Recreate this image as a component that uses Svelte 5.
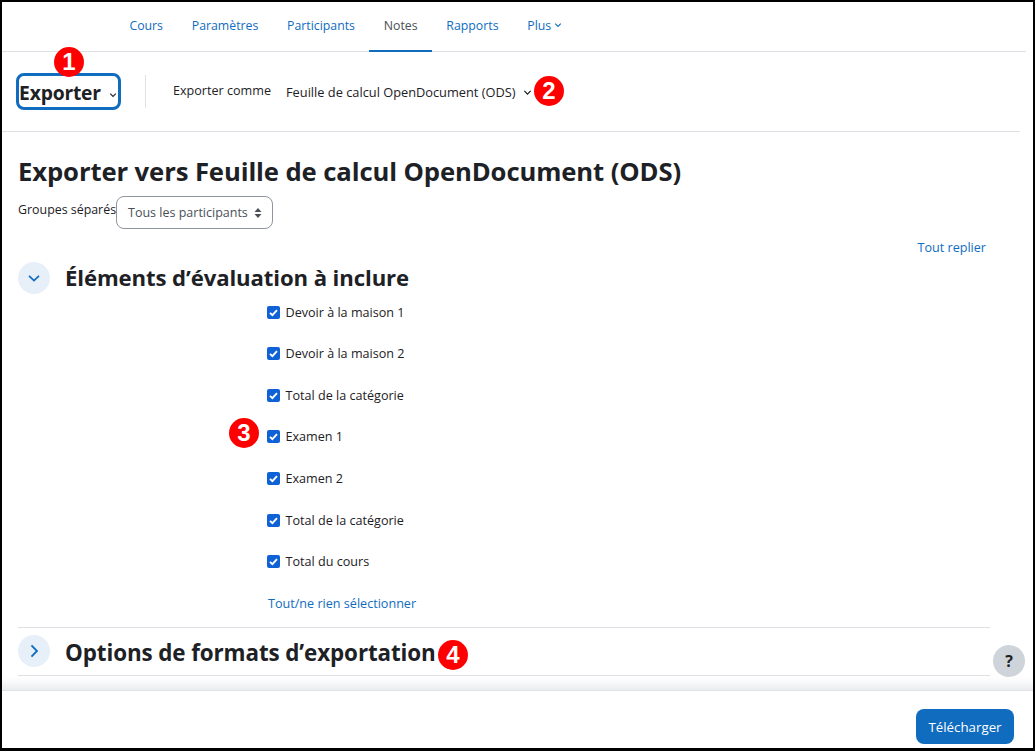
<script lang="ts">
  const tabs = [
    { label: 'Cours' },
    { label: 'Paramètres' },
    { label: 'Participants' },
    { label: 'Notes', active: true },
    { label: 'Rapports' },
    { label: 'Plus', more: true }
  ];

  const items = [
    'Devoir à la maison 1',
    'Devoir à la maison 2',
    'Total de la catégorie',
    'Examen 1',
    'Examen 2',
    'Total de la catégorie',
    'Total du cours'
  ];
</script>

{#snippet chevron(size = 8)}
  <svg class="chev" width={size} height={size} viewBox="0 0 10 10" aria-hidden="true">
    <path d="M1.5 3.2 5 6.8l3.5-3.6" fill="none" stroke="currentColor" stroke-width="1.4" />
  </svg>
{/snippet}

<div class="frame">
  <nav class="tabs">
    {#each tabs as tab}
      <a class="tab" class:active={tab.active} href="#top">
        {tab.label}
        {#if tab.more}{@render chevron(8)}{/if}
      </a>
    {/each}
  </nav>

  <div class="tertiary">
    <button class="export-btn">Exporter {@render chevron(8)}</button>
    <div class="sep"></div>
    <span class="export-label">Exporter comme</span>
    <span class="export-value">Feuille de calcul OpenDocument (ODS) {@render chevron(9)}</span>
    <span class="badge b1">1</span>
    <span class="badge b2">2</span>
  </div>

  <main class="content">
    <h2>Exporter vers Feuille de calcul OpenDocument (ODS)</h2>
    <div class="groups">
      <span class="groups-label">Groupes séparés</span>
      <div class="select">
        Tous les participants
        <svg width="8" height="12" viewBox="0 0 8 12" aria-hidden="true">
          <path d="M4 1 7.5 5h-7zM4 11 .5 7h7z" fill="#495057" />
        </svg>
      </div>
    </div>

    <div class="collapse-all"><a href="#top">Tout replier</a></div>

    <section class="first">
      <div class="sec-head">
        <span class="toggle">
          <svg width="14" height="14" viewBox="0 0 14 14" aria-hidden="true">
            <path d="M2 4.8 7 9.6l5-4.8" fill="none" stroke="#0f6cbf" stroke-width="1.7" />
          </svg>
        </span>
        <h3>Éléments d’évaluation à inclure</h3>
      </div>
      <ul class="checks">
        {#each items as item, i}
          <li>
            <span class="box">
              <svg width="13" height="13" viewBox="0 0 13 13" aria-hidden="true">
                <path d="M3 6.8 5.4 9.2 10 4.2" fill="none" stroke="#fff" stroke-width="1.9" />
              </svg>
            </span>
            {item}
            {#if i === 3}<span class="badge b3">3</span>{/if}
          </li>
        {/each}
      </ul>
      <a class="select-all" href="#top">Tout/ne rien sélectionner</a>
    </section>

    <section class="second">
      <div class="sec-head">
        <span class="toggle">
          <svg width="16" height="16" viewBox="0 0 14 14" aria-hidden="true">
            <path d="M4.8 2 9.6 7l-4.8 5" fill="none" stroke="#0f6cbf" stroke-width="1.6" />
          </svg>
        </span>
        <h3>Options de formats d’exportation</h3>
        <span class="badge b4">4</span>
      </div>
    </section>

    <div class="help">?</div>
  </main>

  <footer>
    <button class="primary">Télécharger</button>
  </footer>
</div>

<style>
  :global(body) {
    margin: 0;
    background: #fff;
  }
  .frame {
    box-sizing: border-box;
    width: 1035px;
    height: 751px;
    border: 2px solid #000;
    border-bottom-width: 3px;
    display: flex;
    flex-direction: column;
    position: relative;
    overflow: hidden;
    font-family: 'Open Sans', 'Noto Sans', sans-serif;
    font-size: 12.6px;
    color: #1d2125;
  }
  a {
    color: #0f6cbf;
    text-decoration: none;
  }
  .tabs {
    height: 50px;
    flex: none;
    box-sizing: border-box;
    display: flex;
    padding-left: 113px;
    margin-right: 7px;
    border-bottom: 1px solid #dee2e6;
    font-size: 12.3px;
  }
  .tab {
    display: flex;
    align-items: center;
    gap: 3px;
    padding: 0 14.4px 2px;
    box-sizing: border-box;
    height: 50px;
    border-bottom: 2px solid transparent;
    white-space: nowrap;
  }
  .tab.active {
    color: #495057;
    border-bottom-color: #0f6cbf;
  }
  .chev {
    display: inline-block;
  }
  .tertiary {
    height: 80px;
    flex: none;
    box-sizing: border-box;
    border-bottom: 1px solid #dee2e6;
    margin-right: 13px;
    display: flex;
    align-items: center;
    padding-left: 14px;
    position: relative;
  }
  .export-btn {
    box-sizing: border-box;
    width: 105px;
    height: 37px;
    border: 3px solid #0f6cbf;
    border-radius: 8px;
    background: #fff;
    padding: 1px 1px 0 0;
    display: flex;
    align-items: center;
    justify-content: center;
    gap: 9px;
    font: 700 19.3px 'Open Sans', sans-serif;
    color: #1d2125;
    letter-spacing: -0.2px;
  }
  .export-btn .chev {
    margin: 6px 0 0 -1px;
  }
  .sep {
    width: 1px;
    height: 33px;
    margin: 0 0 0 24px;
    background: #dee2e6;
  }
  .export-label {
    margin: 0 0 3px 27px;
  }
  .export-value {
    margin-left: 15px;
    margin-top: 1px;
    display: flex;
    align-items: center;
    gap: 7px;
    font-size: 12.8px;
  }
  .badge {
    position: absolute;
    width: 30px;
    height: 30px;
    border-radius: 50%;
    background: #f00;
    color: #fff;
    font: 700 24px/30px 'Liberation Sans', sans-serif;
    text-align: center;
  }
  .b1 {
    left: 52px;
    top: -5px;
  }
  .b2 {
    left: 532px;
    top: 24px;
  }
  .b3 {
    left: -38px;
    top: 2px;
  }
  .b4 {
    left: 420px;
    top: 5px;
  }
  .content {
    flex: 1;
    min-height: 0;
    padding: 0 16px;
    position: relative;
    box-shadow: inset 0 -14px 12px -10px #e4e6ea;
  }
  h2 {
    margin: 23px 0 0;
    font-size: 25.65px;
    line-height: 34px;
    font-weight: 700;
    letter-spacing: -0.1px;
  }
  .groups {
    display: flex;
    align-items: flex-start;
    margin-top: 7px;
  }
  .groups-label {
    margin-top: 5px;
    line-height: 17px;
    font-size: 12.4px;
  }
  .select {
    box-sizing: border-box;
    height: 33px;
    width: 157px;
    border: 1px solid #8f959e;
    border-radius: 8px;
    display: flex;
    align-items: center;
    justify-content: space-between;
    padding: 0 10px 0 11px;
    color: #495057;
    font-size: 12.5px;
  }
  .collapse-all {
    text-align: right;
    margin: 10px 3px 0 0;
    line-height: 17px;
    padding-right: 28px;
  }
  .sec-head {
    display: flex;
    align-items: center;
    position: relative;
    height: 32px;
  }
  .toggle {
    width: 32px;
    height: 32px;
    flex: none;
    border-radius: 50%;
    background: #e7eff8;
    display: flex;
    align-items: center;
    justify-content: center;
  }
  h3 {
    margin: -3px 0 0 15px;
    font-size: 22.15px;
    font-weight: 700;
    line-height: 32px;
    letter-spacing: -0.1px;
  }
  .second h3 {
    margin-top: 3px;
    font-size: 22.4px;
  }
  section {
    margin-right: 27px;
  }
  .first {
    margin-top: 6px;
  }
  .checks {
    list-style: none;
    margin: 0;
    padding: 0 0 0 249px;
  }
  .checks li {
    height: 41.6px;
    display: flex;
    align-items: center;
    gap: 5.5px;
    position: relative;
  }
  .checks li:first-child {
    margin-top: -2.6px;
  }
  .box {
    width: 13px;
    height: 13px;
    border-radius: 2px;
    background: #0f62d6;
    display: inline-flex;
  }
  .select-all {
    display: block;
    margin: 12.6px 0 0 250px;
    line-height: 17px;
  }
  .second {
    margin-top: 15px;
    border-top: 1px solid #dee2e6;
    border-bottom: 1px solid #dee2e6;
    padding: 7px 0;
    height: 49px;
    box-sizing: border-box;
  }
  .help {
    position: absolute;
    right: 8px;
    bottom: 13px;
    width: 32px;
    height: 32px;
    border-radius: 50%;
    background: #ced4da;
    font: 700 16px/32px 'Open Sans', sans-serif;
    text-align: center;
  }
  footer {
    height: 58px;
    flex: none;
    box-sizing: border-box;
    border-top: 1px solid #dee2e6;
    display: flex;
    justify-content: flex-end;
    align-items: flex-end;
    padding: 0 19px 4px 0;
  }
  .primary {
    width: 98px;
    height: 35px;
    border: 0;
    border-radius: 8px;
    background: #0f6cbf;
    color: #fff;
    font: 13.3px 'Open Sans', sans-serif;
  }
</style>
